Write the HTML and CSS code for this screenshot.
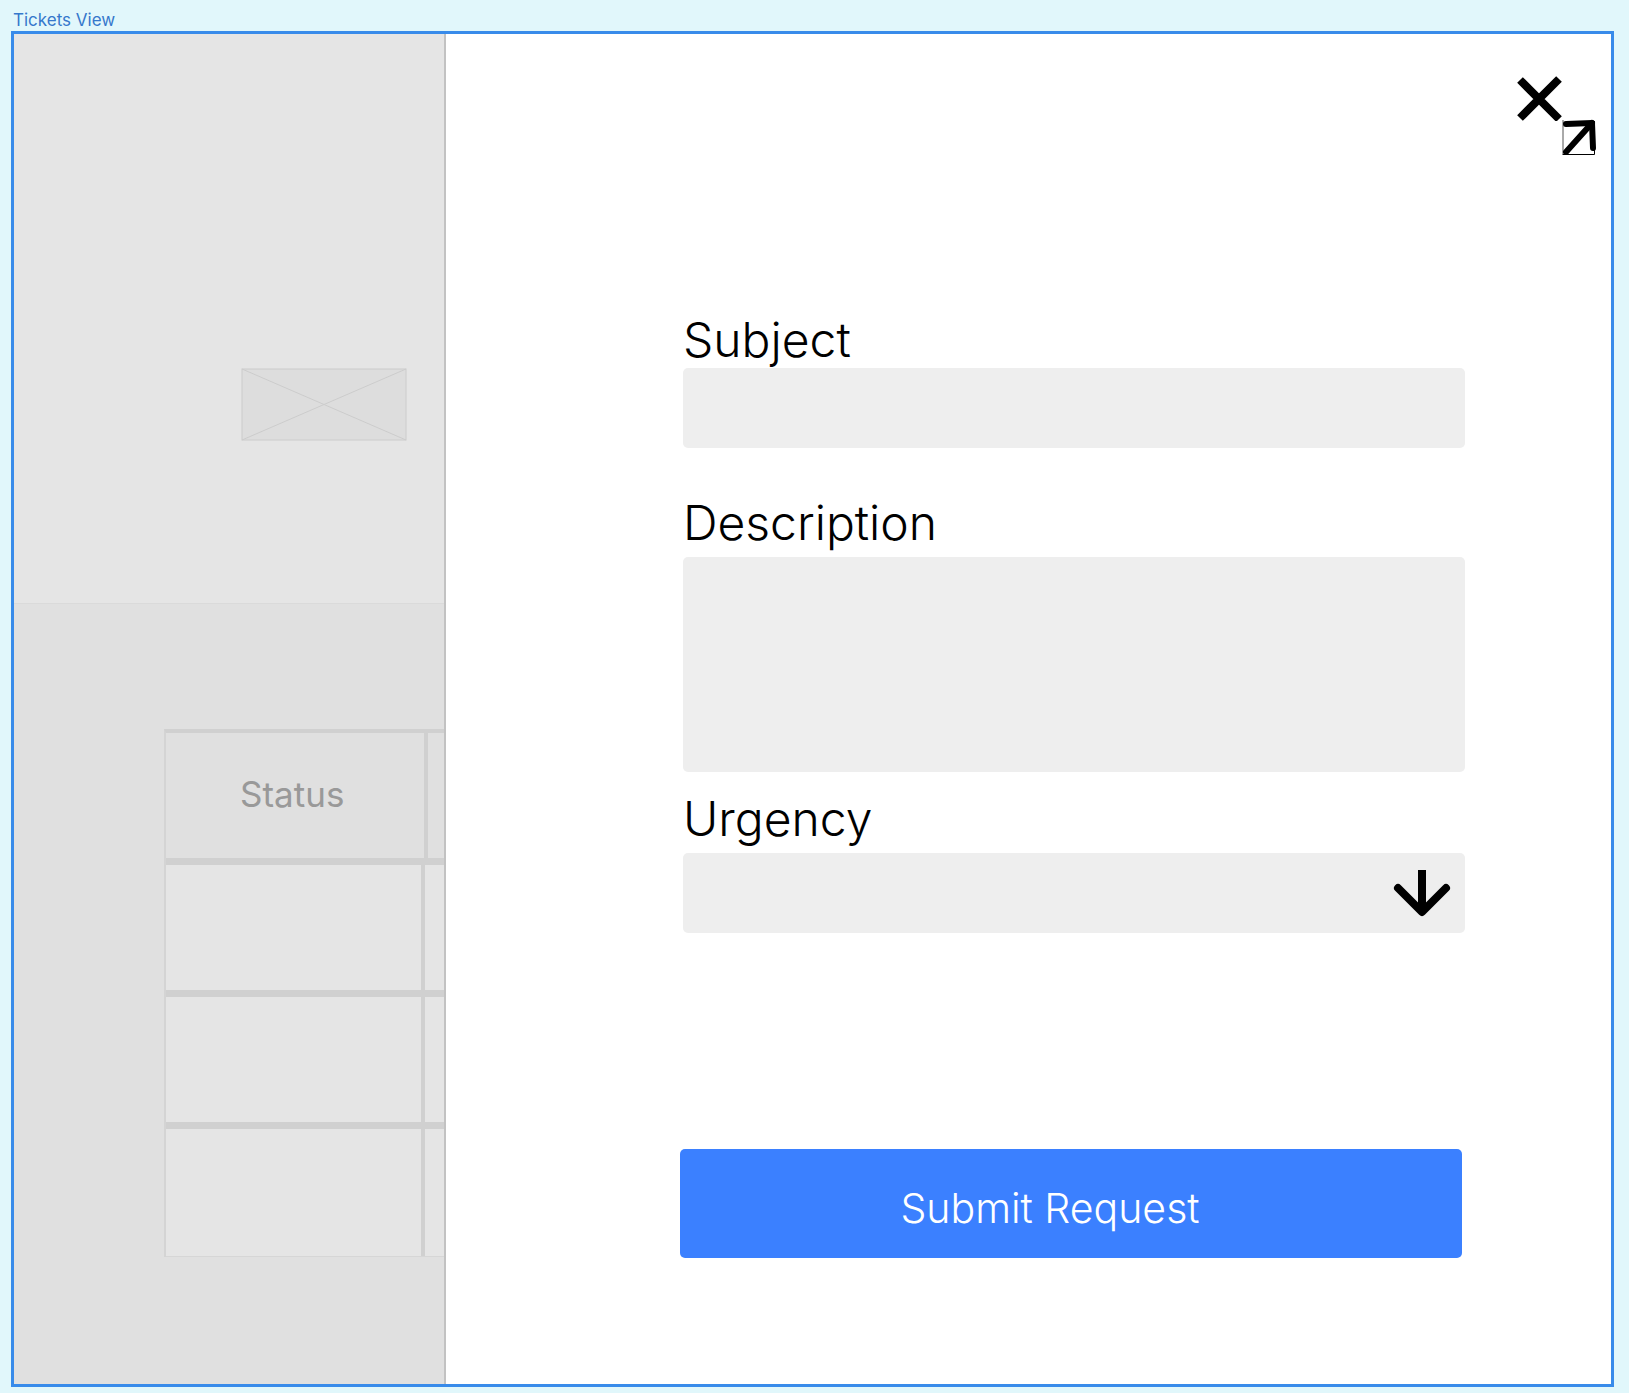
FILE: index.html
```html
<!DOCTYPE html>
<html lang="en">
<head>
<meta charset="utf-8">
<title>Tickets View</title>
<link rel="stylesheet" href="styles.css">
</head>
<body>
<h1 class="frame-title">Tickets View</h1>
<main class="frame">
  <section class="backdrop">
    <div class="backdrop-top">
      <svg class="placeholder" viewBox="0 0 166 73" aria-hidden="true">
        <rect x="1" y="1" width="164" height="71"/>
        <path d="M1 1L165 72M165 1L1 72"/>
      </svg>
    </div>
    <div class="backdrop-list">
      <table class="tickets">
        <thead><tr><th scope="col">Status</th><td></td></tr></thead>
        <tbody>
          <tr><td></td><td></td></tr>
          <tr><td></td><td></td></tr>
          <tr><td></td><td></td></tr>
        </tbody>
      </table>
    </div>
  </section>
  <section class="panel">
    <div class="actions">
      <button class="icon-button" type="button" aria-label="Close">
        <svg width="45" height="45" viewBox="0 0 45 45"><path d="M3 4L42 43M42 3L3 42" stroke="#000" stroke-width="8" fill="none"/></svg>
      </button>
      <button class="icon-button expand" type="button" aria-label="Expand">
        <svg width="36" height="36" viewBox="0 0 36 36" fill="none" stroke="#000">
          <path d="M1 1V35" stroke="#555"/><path d="M.5 35.500H32.500V2"/>
          <path d="M4 33L30 4" stroke-width="6" stroke-linecap="round"/>
          <path d="M4 5L30 4L31 29" stroke-width="6" stroke-linecap="round" stroke-linejoin="round"/>
        </svg>
      </button>
    </div>
    <form class="request">
      <div class="field field-subject">
        <label for="subject">Subject</label>
        <input id="subject" type="text">
      </div>
      <div class="field field-description">
        <label for="description">Description</label>
        <textarea id="description"></textarea>
      </div>
      <div class="field">
        <label for="urgency">Urgency</label>
        <div class="select-box">
          <select id="urgency"><option value=""></option></select>
          <svg class="arrow" width="58" height="48" viewBox="0 0 58 48" fill="none" stroke="#000" aria-hidden="true">
            <path d="M29 0V41" stroke-width="8"/>
            <path d="M5 18L29 42L53 18" stroke-width="8" stroke-linecap="round" stroke-linejoin="round"/>
          </svg>
        </div>
      </div>
      <button class="submit" type="submit">Submit Request</button>
    </form>
  </section>
</main>
</body>
</html>
```
FILE: styles.css
```css
* { box-sizing: border-box; }

body {
  margin: 0;
  min-height: 100vh;
  padding: 9px 15px 6px 11px;
  display: flex;
  flex-direction: column;
  background: #e1f7fb;
  font-family: Inter, "Open Sans", sans-serif;
  color: #000;
}

.frame-title {
  margin: 0;
  padding-left: 2px;
  font-size: 17px;
  line-height: 22px;
  font-weight: 400;
  color: #3578cc;
}

.frame {
  flex: 1;
  display: grid;
  grid-template-columns: 432px 1fr;
  border: 3px solid #388bea;
  background: #fff;
}

.backdrop {
  display: flex;
  flex-direction: column;
  min-width: 0;
  overflow: hidden;
  border-right: 2px solid #c2c2c2;
  background: #e5e5e5;
}

.backdrop-top {
  height: 570px;
  padding: 334px 0 0 227px;
  border-bottom: 1px solid #dadada;
}

.placeholder {
  display: block;
  width: 166px;
  height: 73px;
  fill: #dddddd;
  stroke: #cccccc;
  stroke-width: 1;
}

.backdrop-list {
  flex: 1;
  padding: 125px 0 0 150px;
  background: #e0e0e0;
}

.tickets {
  display: block;
  border-top: 4px solid #d0d0d0;
  border-left: 2px solid #d4d4d4;
}

.tickets thead,
.tickets tbody { display: block; }

.tickets tr {
  display: grid;
  grid-template-columns: 259px 1fr;
  height: 132px;
  border-bottom: 7px solid #d0d0d0;
}

.tickets thead tr {
  grid-template-columns: 262px 1fr;
}

.tickets tbody { background: #e5e5e5; }

.tickets tbody tr:last-child {
  height: 128px;
  border-bottom: 1px solid #d6d6d6;
}

.tickets th,
.tickets td { padding: 0; }

.tickets th,
.tickets td:first-child {
  border-right: 4px solid #d0d0d0;
}

.tickets thead td:last-child { border: 0; }

.tickets th {
  padding: 40px 0 0 74px;
  text-align: left;
  font-size: 35px;
  line-height: 42px;
  font-weight: 400;
  color: #999;
}

.panel { min-width: 0; }

.actions {
  display: grid;
  grid-template-columns: 45px 36px;
  grid-template-rows: 43px 36px;
  justify-content: end;
  padding: 42px 13px 0 0;
}

.icon-button {
  border: 0;
  padding: 0;
  background: none;
}

.icon-button svg { display: block; }

.expand { grid-area: 2 / 2; }

.request {
  display: flex;
  flex-direction: column;
  padding: 161px 146px 80px 234px;
}

.field {
  display: flex;
  flex-direction: column;
  gap: 10px;
  margin-left: 3px;
}

.field-subject {
  gap: 4px;
  margin-bottom: 51px;
}

.field-description { margin-bottom: 23px; }

.field label {
  font-size: 48px;
  line-height: 48px;
  font-weight: 300;
}

.field input,
.field textarea,
.field select {
  display: block;
  width: 100%;
  height: 80px;
  border: 0;
  border-radius: 5px;
  padding: 16px;
  background: #eeeeee;
  font: inherit;
  font-size: 35px;
  appearance: none;
  resize: none;
}

.field textarea { height: 215px; }

.select-box { position: relative; }

.arrow {
  position: absolute;
  top: 17px;
  right: 14px;
  pointer-events: none;
}

.submit {
  height: 109px;
  margin: 216px 3px 0 0;
  padding: 8px 42px 0 0;
  border: 0;
  border-radius: 5px;
  background: #3b80ff;
  color: #fff;
  font-family: inherit;
  font-size: 41px;
  font-weight: 300;
}
```
